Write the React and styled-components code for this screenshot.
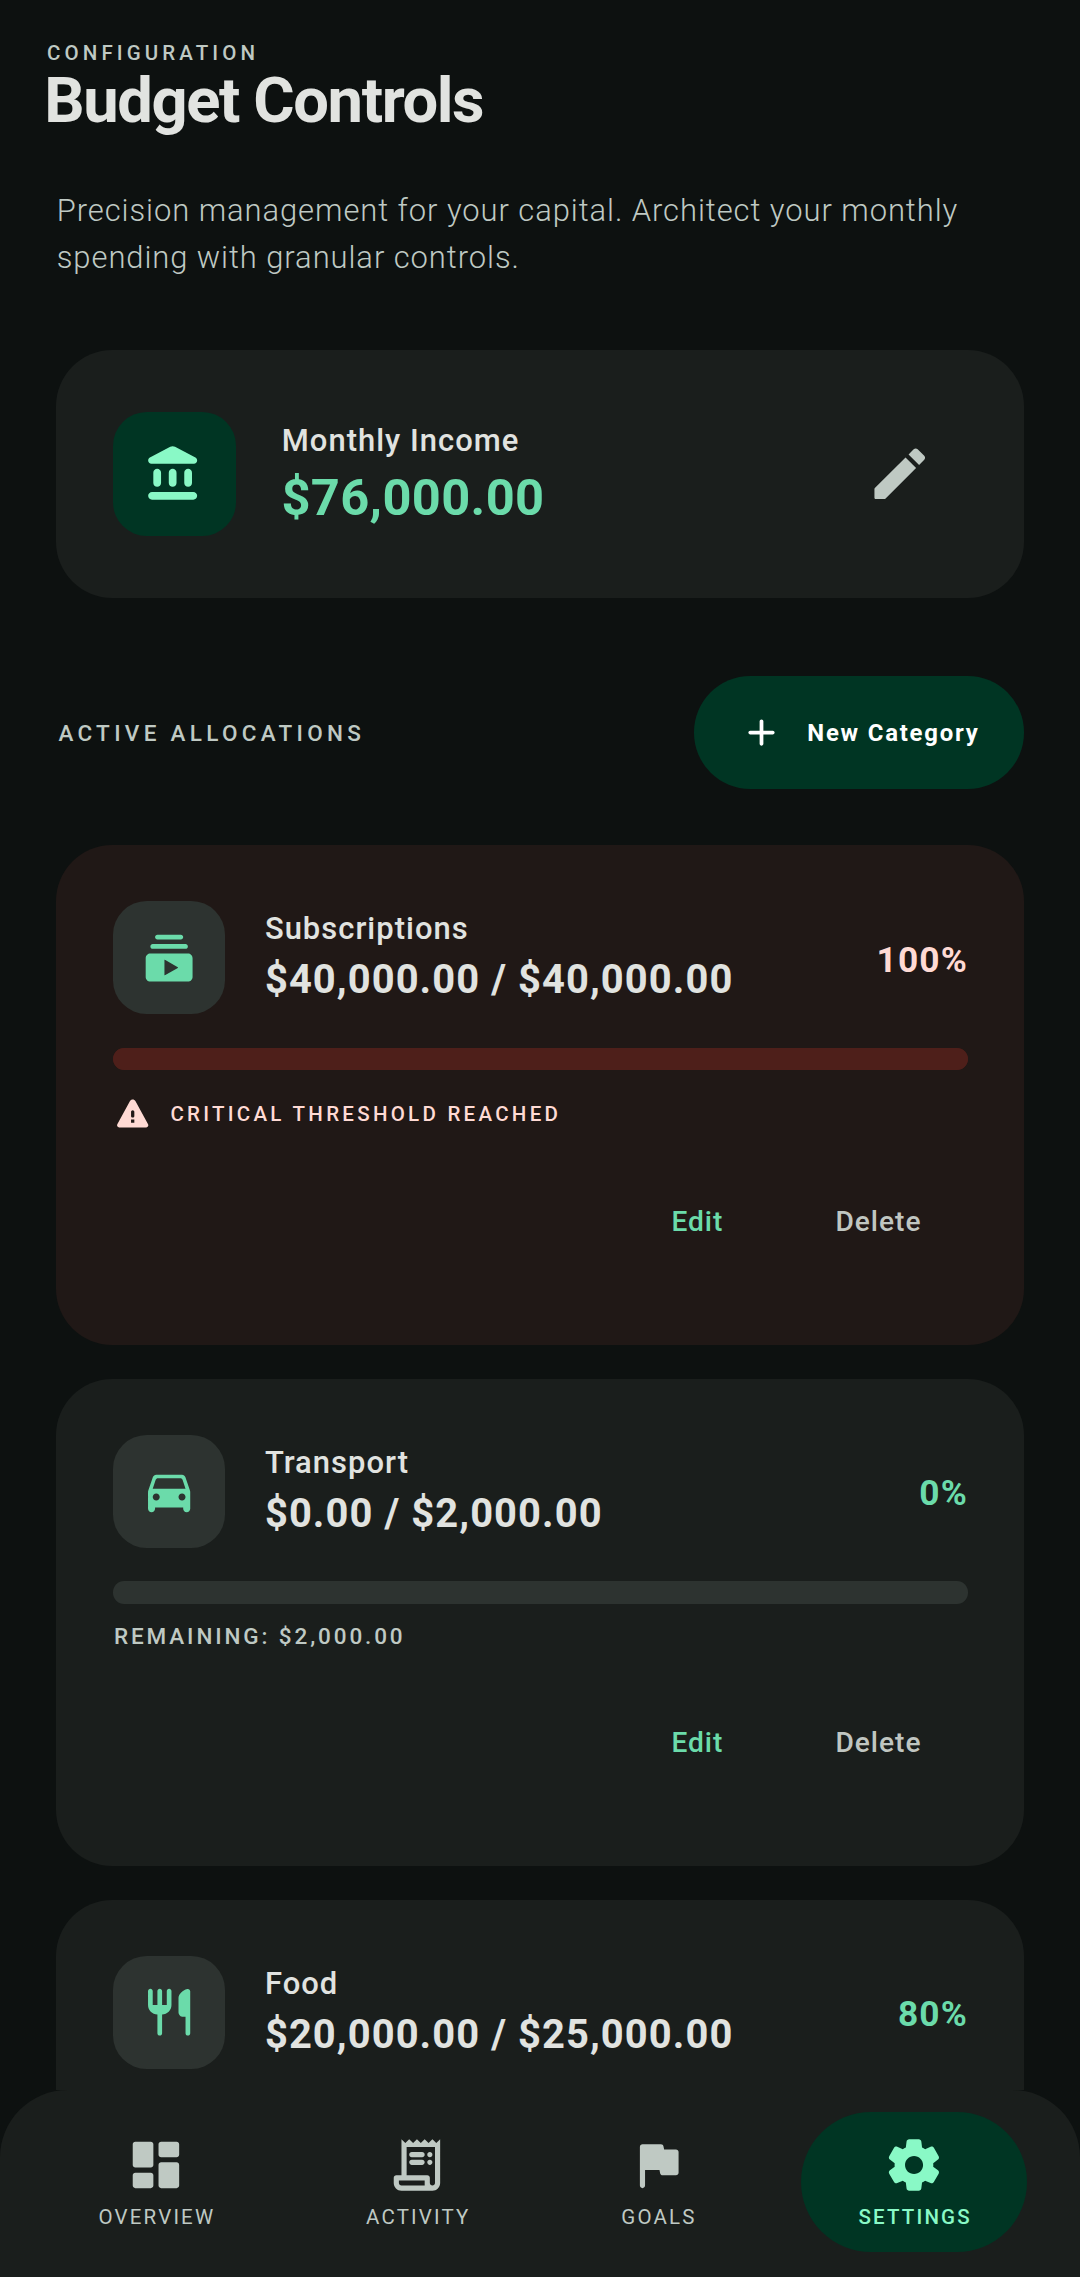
import React, { useState } from 'react';
import styled, { createGlobalStyle, css } from 'styled-components';

const colors = {
  background: '#0d1110',
  surface: '#1a1e1c',
  surfaceHigh: '#2d3330',
  errorSurface: '#201816',
  errorTrack: '#4e1f1a',
  onError: '#ffdad4',
  text: '#e1e3e0',
  muted: '#bfc9c3',
  primary: '#6bdbaa',
  primaryContainer: '#003523',
  onPrimaryContainer: '#89f9c6',
};

const icons = {
  bank:
    'M4 11.5v4c0 .83.67 1.5 1.5 1.5S7 16.33 7 15.5v-4c0-.83-.67-1.5-1.5-1.5S4 10.67 4 11.5zm6 0v4c0 .83.67 1.5 1.5 1.5s1.5-.67 1.5-1.5v-4c0-.83-.67-1.5-1.5-1.5s-1.5.67-1.5 1.5zM3.5 22h16c.83 0 1.5-.67 1.5-1.5s-.67-1.5-1.5-1.5h-16c-.83 0-1.5.67-1.5 1.5S2.67 22 3.5 22zM16 11.5v4c0 .83.67 1.5 1.5 1.5s1.5-.67 1.5-1.5v-4c0-.83-.67-1.5-1.5-1.5s-1.5.67-1.5 1.5zM10.57 1.49l-7.9 4.16c-.41.21-.67.64-.67 1.1C2 7.44 2.56 8 3.25 8h16.51C20.44 8 21 7.44 21 6.75c0-.46-.26-.89-.67-1.1l-7.9-4.16c-.58-.31-1.28-.31-1.86 0z',
  edit:
    'M3 17.46v3.04c0 .28.22.5.5.5h3.04c.13 0 .26-.05.35-.15L17.81 9.94l-3.75-3.75L3.15 17.1c-.1.1-.15.22-.15.36zM20.71 7.04c.39-.39.39-1.02 0-1.41l-2.34-2.34c-.39-.39-1.02-.39-1.41 0l-1.83 1.83 3.75 3.75 1.83-1.83z',
  add:
    'M18 13h-5v5c0 .55-.45 1-1 1s-1-.45-1-1v-5H6c-.55 0-1-.45-1-1s.45-1 1-1h5V6c0-.55.45-1 1-1s1 .45 1 1v5h5c.55 0 1 .45 1 1s-.45 1-1 1z',
  subscriptions:
    'M19 8H5c-.55 0-1-.45-1-1s.45-1 1-1h14c.55 0 1 .45 1 1s-.45 1-1 1zM17 4H7c-.55 0-1-.45-1-1s.45-1 1-1h10c.55 0 1 .45 1 1s-.45 1-1 1zM20 10H4c-1.1 0-2 .9-2 2v8c0 1.1.9 2 2 2h16c1.1 0 2-.9 2-2v-8c0-1.1-.9-2-2-2zM10 19.15v-6.3c0-.1.1-.16.2-.11l5.5 3.1c.15.08.15.24 0 .32l-5.5 3.1c-.1.05-.2-.01-.2-.11z',
  car:
    'M18.92 6.01C18.72 5.42 18.16 5 17.5 5h-11c-.66 0-1.21.42-1.42 1.01L3.11 11.68c-.07.21-.11.43-.11.66v7.16c0 .83.67 1.5 1.5 1.5S6 20.33 6 19.5V19h12v.5c0 .82.67 1.5 1.5 1.5.82 0 1.5-.67 1.5-1.5v-7.16c0-.22-.04-.45-.11-.66l-1.97-5.67zM6.5 16c-.83 0-1.5-.67-1.5-1.5S5.67 13 6.5 13s1.5.67 1.5 1.5S7.33 16 6.5 16zm11 0c-.83 0-1.5-.67-1.5-1.5s.67-1.5 1.5-1.5 1.5.67 1.5 1.5-.67 1.5-1.5 1.5zM5 11l1.27-3.82c.14-.4.52-.68.95-.68h9.56c.43 0 .81.28.95.68L19 11H5z',
  food:
    'M16 6v6c0 1.1.9 2 2 2h1v7c0 .55.45 1 1 1s1-.45 1-1V3.13c0-.65-.61-1.13-1.24-.98C17.6 2.68 16 4.51 16 6zm-5 3H9V3c0-.55-.45-1-1-1s-1 .45-1 1v6H5V3c0-.55-.45-1-1-1s-1 .45-1 1v6c0 2.21 1.79 4 4 4v8c0 .55.45 1 1 1s1-.45 1-1v-8c2.21 0 4-1.79 4-4V3c0-.55-.45-1-1-1s-1 .45-1 1v6z',
  warning:
    'M3.73 21h16.54c.97 0 1.58-1.05 1.1-1.9L13.73 4.99c-.77-1.33-2.69-1.33-3.46 0L2.63 19.1c-.48.85.13 1.9 1.1 1.9zM12 15c-.55 0-1-.45-1-1v-2.5c0-.55.45-1 1-1s1 .45 1 1V14c0 .55-.45 1-1 1zm1 3.2h-2v-2h2v2z',
  overview:
    'M4 13h6c.55 0 1-.45 1-1V4c0-.55-.45-1-1-1H4c-.55 0-1 .45-1 1v8c0 .55.45 1 1 1zm0 8h6c.55 0 1-.45 1-1v-4c0-.55-.45-1-1-1H4c-.55 0-1 .45-1 1v4c0 .55.45 1 1 1zm10 0h6c.55 0 1-.45 1-1v-8c0-.55-.45-1-1-1h-6c-.55 0-1 .45-1 1v8c0 .55.45 1 1 1zM13 4v4c0 .55.45 1 1 1h6c.55 0 1-.45 1-1V4c0-.55-.45-1-1-1h-6c-.55 0-1 .45-1 1z',
  activity:
    'M19.5 3.5L18 2l-1.5 1.5L15 2l-1.5 1.5L12 2l-1.5 1.5L9 2 7.5 3.5 6 2v14H4c-.55 0-1 .45-1 1v2c0 1.66 1.34 3 3 3h12c1.66 0 3-1.34 3-3V2l-1.5 1.5zM15 20H6c-.55 0-1-.45-1-1v-1h10v2zm4-1c0 .55-.45 1-1 1s-1-.45-1-1v-2c0-.55-.45-1-1-1H8V5h11v14zM10 7h4c.55 0 1 .45 1 1s-.45 1-1 1h-4c-.55 0-1-.45-1-1s.45-1 1-1zM17 7c.55 0 1 .45 1 1s-.45 1-1 1-1-.45-1-1 .45-1 1-1zM10 10h4c.55 0 1 .45 1 1s-.45 1-1 1h-4c-.55 0-1-.45-1-1s.45-1 1-1zM17 10c.55 0 1 .45 1 1s-.45 1-1 1-1-.45-1-1 .45-1 1-1z',
  goals:
    'M14.4 6l-.24-1.2c-.09-.46-.5-.8-.98-.8H6c-.55 0-1 .45-1 1v15c0 .55.45 1 1 1s1-.45 1-1v-6h5.6l.24 1.2c.09.47.5.8.98.8H19c.55 0 1-.45 1-1V7c0-.55-.45-1-1-1h-4.6z',
  settings:
    'M19.5 12c0-.23-.01-.45-.03-.68l1.86-1.41c.4-.3.51-.86.26-1.3l-1.87-3.23c-.25-.44-.79-.62-1.25-.42l-2.15.91c-.37-.26-.76-.49-1.17-.68l-.29-2.31c-.06-.5-.49-.88-.99-.88h-3.73c-.51 0-.94.38-1 .88l-.29 2.31c-.41.19-.8.42-1.17.68l-2.15-.91c-.46-.2-1-.02-1.25.42L2.41 8.62c-.25.44-.14.99.26 1.3l1.86 1.41c-.02.22-.03.44-.03.67s.01.45.03.68l-1.86 1.41c-.4.3-.51.86-.26 1.3l1.87 3.23c.25.44.79.62 1.25.42l2.15-.91c.37.26.76.49 1.17.68l.29 2.31c.06.5.49.88.99.88h3.73c.5 0 .93-.38.99-.88l.29-2.31c.41-.19.8-.42 1.17-.68l2.15.91c.46.2 1 .02 1.25-.42l1.87-3.23c.25-.44.14-.99-.26-1.3l-1.86-1.41c.03-.23.04-.45.04-.68zm-7.46 3.5c-1.93 0-3.5-1.57-3.5-3.5s1.57-3.5 3.5-3.5 3.5 1.57 3.5 3.5-1.57 3.5-3.5 3.5z',
};

const allocations = [
  { name: 'Subscriptions', icon: 'subscriptions', amount: '$40,000.00 / $40,000.00', percent: 100 },
  {
    name: 'Transport',
    icon: 'car',
    amount: '$0.00 / $2,000.00',
    percent: 0,
    remaining: '$2,000.00',
  },
  {
    name: 'Food',
    icon: 'food',
    amount: '$20,000.00 / $25,000.00',
    percent: 80,
    summaryOnly: true,
  },
];

const tabs = [
  { id: 'overview', label: 'OVERVIEW' },
  { id: 'activity', label: 'ACTIVITY' },
  { id: 'goals', label: 'GOALS' },
  { id: 'settings', label: 'SETTINGS' },
];

const Icon = ({ name, size }) => (
  <IconSvg viewBox="0 0 24 24" $size={size}>
    <path d={icons[name]} />
  </IconSvg>
);

const Allocation = ({ name, icon, amount, percent, remaining, summaryOnly }) => {
  const critical = percent >= 100;

  return (
    <AllocationCard $critical={critical}>
      <AllocationTop>
        <Tile>
          <Icon name={icon} size={56.25} />
        </Tile>
        <AllocationText>
          <AllocationName>{name}</AllocationName>
          <AllocationAmount>{amount}</AllocationAmount>
        </AllocationText>
        <Percent $critical={critical}>{percent}%</Percent>
      </AllocationTop>
      <Track $critical={critical}>
        <Fill $critical={critical} style={{ width: `${percent}%` }} />
      </Track>
      {critical && (
        <Warning>
          <Icon name="warning" size={39.4} />
          <WarningText>CRITICAL THRESHOLD REACHED</WarningText>
        </Warning>
      )}
      {remaining && <Remaining>REMAINING: {remaining}</Remaining>}
      {!summaryOnly && (
        <Actions>
          <TextButton $primary>Edit</TextButton>
          <TextButton>Delete</TextButton>
        </Actions>
      )}
    </AllocationCard>
  );
};

const App = () => {
  const [active, setActive] = useState('settings');

  return (
    <>
      <GlobalStyle />
      <Screen>
        <Content>
          <Header>
            <Eyebrow>CONFIGURATION</Eyebrow>
            <Title>Budget Controls</Title>
          </Header>
          <Body>
            <Description>
              Precision management for your capital. Architect your monthly
              spending with granular controls.
            </Description>
            <IncomeCard>
              <IncomeTile>
                <Icon name="bank" size={61.9} />
              </IncomeTile>
              <IncomeText>
                <IncomeLabel>Monthly Income</IncomeLabel>
                <IncomeAmount>$76,000.00</IncomeAmount>
              </IncomeText>
              <IconButton aria-label="Edit income">
                <Icon name="edit" size={67.5} />
              </IconButton>
            </IncomeCard>
            <SectionHeader>
              <SectionTitle>ACTIVE ALLOCATIONS</SectionTitle>
              <NewButton>
                <Icon name="add" size={45} />
                <NewLabel>New Category</NewLabel>
              </NewButton>
            </SectionHeader>
            <AllocationList>
              {allocations.map((item) => (
                <Allocation key={item.name} {...item} />
              ))}
            </AllocationList>
          </Body>
        </Content>
        <NavBar>
          {tabs.map(({ id, label }) => (
            <NavItem key={id} $active={id === active} onClick={() => setActive(id)}>
              <Icon name={id} size={61.9} />
              <NavLabel $active={id === active}>{label}</NavLabel>
            </NavItem>
          ))}
        </NavBar>
      </Screen>
    </>
  );
};

const GlobalStyle = createGlobalStyle`
  * {
    box-sizing: border-box;
  }
  body {
    margin: 0;
    background: ${colors.background};
    color: ${colors.text};
    font-family: Roboto, sans-serif;
  }
  button {
    border: none;
    background: none;
    color: inherit;
    font: inherit;
    cursor: pointer;
  }
`;

// spreads the letter spacing evenly on both sides of the text
const tracking = (value) => css`
  letter-spacing: ${value}px;
  padding-left: ${value / 2}px;
  margin-right: ${-value / 2}px;
`;

const IconSvg = styled.svg`
  display: block;
  flex: none;
  width: ${({ $size }) => $size}px;
  height: ${({ $size }) => $size}px;
  fill: currentColor;
`;

const Screen = styled.div`
  display: flex;
  flex-direction: column;
  width: 1080px;
  height: 2277px;
  overflow: hidden;
`;

const Content = styled.main`
  flex: 1;
  min-height: 0;
  overflow: hidden;
`;

const Header = styled.header`
  padding: 41px 45px 0;
`;

const Eyebrow = styled.div`
  ${tracking(4.1)}
  color: ${colors.muted};
  font-size: 20.5px;
  font-weight: 500;
  line-height: 24px;
`;

const Title = styled.h1`
  margin: 0 0 0 -0.7px;
  font-size: 63.28px;
  font-weight: 700;
  line-height: 71px;
  letter-spacing: -1.41px;
`;

const Body = styled.div`
  padding: 51px 56.25px 0;
`;

const Description = styled.p`
  margin: 0;
  padding-left: 0.5px;
  color: ${colors.muted};
  font-size: 30.94px;
  font-weight: 300;
  line-height: 47px;
  letter-spacing: 0.93px;
`;

const IncomeCard = styled.section`
  display: flex;
  align-items: center;
  height: 247.5px;
  margin-top: 69.2px;
  padding: 0 56.25px;
  border-radius: 56.25px;
  background: ${colors.surface};
`;

const Tile = styled.div`
  display: flex;
  flex: none;
  align-items: center;
  justify-content: center;
  width: 112.5px;
  height: 112.5px;
  border-radius: 33.75px;
  background: ${colors.surfaceHigh};
  color: ${colors.primary};
`;

const IncomeTile = styled(Tile)`
  width: 123.75px;
  height: 123.75px;
  background: ${colors.primaryContainer};
  color: ${colors.onPrimaryContainer};
`;

const IncomeText = styled.div`
  flex: 1;
  margin-left: 45px;
`;

const IncomeLabel = styled.div`
  ${tracking(1.02)}
  font-size: 30.94px;
  font-weight: 500;
  line-height: 49.4px;
`;

const IncomeAmount = styled.div`
  ${tracking(0.35)}
  color: ${colors.primary};
  font-size: 50.63px;
  font-weight: 700;
  line-height: 66.6px;
`;

const IconButton = styled.button`
  display: flex;
  align-items: center;
  justify-content: center;
  width: 135px;
  height: 135px;
  padding: 0;
  color: ${colors.muted};
`;

const SectionHeader = styled.div`
  display: flex;
  align-items: center;
  justify-content: space-between;
  height: 112.5px;
  margin-top: 78.75px;
`;

const SectionTitle = styled.h2`
  ${tracking(4.3)}
  margin-top: 0;
  margin-bottom: 0;
  color: ${colors.muted};
  font-size: 22.5px;
  font-weight: 500;
  line-height: 28px;
`;

const NewButton = styled.button`
  display: flex;
  align-items: center;
  gap: 22.5px;
  height: 112.5px;
  padding: 0 45px;
  border-radius: 56.25px;
  background: ${colors.primaryContainer};
  color: #fff;
`;

const NewLabel = styled.span`
  ${tracking(1.8)}
  font-size: 23.9px;
  font-weight: 700;
  line-height: 32px;
`;

const AllocationList = styled.div`
  display: flex;
  flex-direction: column;
  gap: 33.75px;
  margin-top: 56.25px;
`;

const AllocationCard = styled.article`
  padding: 56.25px;
  border-radius: 56.25px;
  background: ${({ $critical }) => ($critical ? colors.errorSurface : colors.surface)};
`;

const AllocationTop = styled.div`
  display: flex;
  align-items: center;
`;

const AllocationText = styled.div`
  flex: 1;
  margin-left: 39.4px;
`;

const AllocationName = styled.div`
  ${tracking(1.02)}
  font-size: 30.94px;
  font-weight: 500;
  line-height: 44px;
`;

const AllocationAmount = styled.div`
  ${tracking(1.08)}
  font-size: 39.9px;
  font-weight: 700;
  line-height: 57.4px;
`;

const Percent = styled.div`
  ${tracking(1.2)}
  margin-top: 5px;
  color: ${({ $critical }) => ($critical ? colors.onError : colors.primary)};
  font-size: 35.3px;
  font-weight: 700;
  line-height: 45px;
`;

const Track = styled.div`
  height: 22.5px;
  margin-top: 33.75px;
  border-radius: 11.25px;
  background: ${({ $critical }) => ($critical ? colors.errorTrack : colors.surfaceHigh)};
  overflow: hidden;
`;

const Fill = styled.div`
  height: 100%;
  border-radius: 11.25px;
  background: ${({ $critical }) => ($critical ? colors.errorTrack : colors.primary)};
`;

const Warning = styled.div`
  display: flex;
  align-items: center;
  gap: 16.9px;
  height: 39.4px;
  margin-top: 22.5px;
  color: ${colors.onError};
`;

const WarningText = styled.span`
  ${tracking(3.27)}
  margin-top: 3px;
  font-size: 20.5px;
  font-weight: 500;
  line-height: 24px;
`;

const Remaining = styled.div`
  ${tracking(2.88)}
  height: 26.8px;
  margin-top: 22.5px;
  color: ${colors.muted};
  font-size: 22.5px;
  font-weight: 500;
  line-height: 20px;
`;

const Actions = styled.div`
  display: flex;
  justify-content: flex-end;
  gap: 22px;
  margin-top: 21.8px;
`;

const TextButton = styled.button`
  height: 135px;
  padding: 0 45px;
  color: ${({ $primary }) => ($primary ? colors.primary : '#c0c6c1')};
  font-size: 28.13px;
  font-weight: 500;
  line-height: 135px;
  letter-spacing: 1px;

  &:last-child {
    padding-right: 46px;
  }
`;

const NavBar = styled.nav`
  display: flex;
  flex: none;
  align-items: flex-start;
  justify-content: space-between;
  height: 187.5px;
  padding: 22.2px 53px 0 52.5px;
  border-radius: 67.5px 67.5px 0 0;
  background: ${colors.surface};
`;

const NavItem = styled.button`
  display: flex;
  flex-direction: column;
  align-items: center;
  gap: 9px;
  height: 140.6px;
  padding: 22.5px ${({ $active }) => ($active ? 56.25 : 45)}px 0;
  border-radius: 70.3px;
  background: ${({ $active }) => ($active ? colors.primaryContainer : 'transparent')};
  color: ${({ $active }) => ($active ? colors.onPrimaryContainer : colors.muted)};
`;

const NavLabel = styled.span`
  ${tracking(2.15)}
  font-size: 20.5px;
  font-weight: ${({ $active }) => ($active ? 500 : 400)};
  line-height: 24px;
`;

export default App;
